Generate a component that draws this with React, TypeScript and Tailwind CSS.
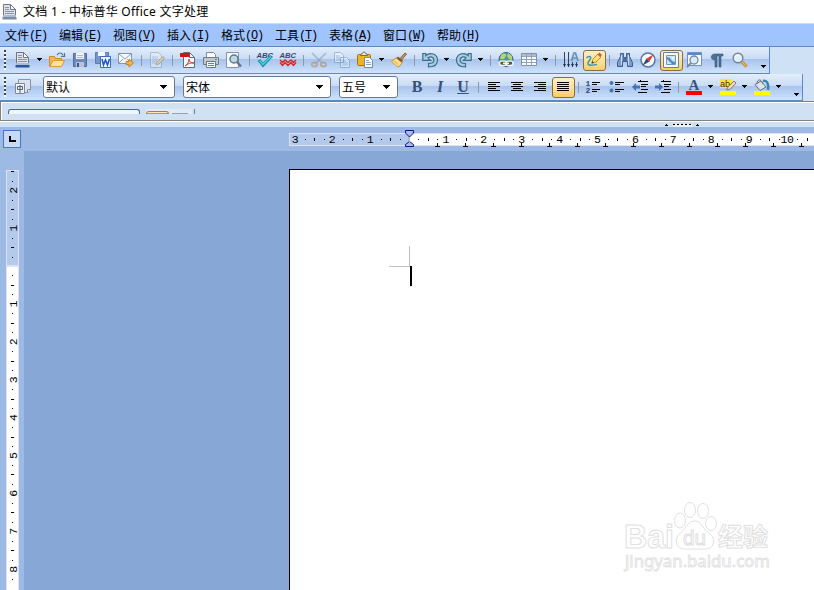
import React from "react";

type Item = { kind: "btn" | "active" | "sep" | "arrow"; icon?: React.ReactNode };

const btn = (icon: React.ReactNode): Item => ({ kind: "btn", icon });
const active = (icon: React.ReactNode): Item => ({ kind: "active", icon });
const sep: Item = { kind: "sep" };
const arrow: Item = { kind: "arrow" };

function Svg({ children, faded }: { children: React.ReactNode; faded?: boolean }) {
  return (
    <svg width="16" height="16" viewBox="0 0 16 16" fill="none" className={faded ? "shrink-0 overflow-visible opacity-45" : "shrink-0 overflow-visible"}>
      {children}
    </svg>
  );
}

function Down() {
  return (
    <svg width="5" height="3" viewBox="0 0 5 3" shapeRendering="crispEdges" className="shrink-0">
      <path d="M0 0h5v1H0zM1 1h3v1H1zM2 2h1v1H2z" fill="#000" />
    </svg>
  );
}

function NewDoc({ dark = "#2c5796" }: { dark?: string }) {
  return (
    <Svg>
      <path d="M1.500 14V.5h7l5 5V14z" fill="#dfe2e7" stroke="#6b7585" />
      <path d="M8.500.5v5h5z" fill="#fff" stroke="#6b7585" />
      <path d="M3 3.500h4M3 5.500h4M3 7.500h9M3 9.500h9" stroke="#8a92a0" />
      <path d="M1 11h13v2H1z" fill="#a9bbd6" />
      <path d="M.5 13h14v2.500H.5z" fill={dark} />
    </Svg>
  );
}

const openIcon = (
  <Svg>
    <path d="M.5 14V4.500h5l1 2h6V14z" fill="#f1b64d" stroke="#c78a2d" />
    <path d="M1 14.500 4 8.500h11.500L12.500 14.500z" fill="#ffe3a0" stroke="#d89b3c" />
    <path d="M8 3c2-3 5-2.500 6 .5M15.500 1v3.500H12" stroke="#4e7499" strokeWidth="1.200" />
  </Svg>
);

const saveIcon = (
  <Svg>
    <path d="M1.500 1.500h13v13h-13z" fill="#6d8ac0" stroke="#506ba4" />
    <path d="M4 1h8v6H4z" fill="#f3f5fa" />
    <path d="M4 10h8v5H4z" fill="#b9c3d8" />
    <path d="M5 11h2v4H5z" fill="#3c5688" />
    <path d="M5 3.500h6M5 5.500h6" stroke="#a9b7d1" />
  </Svg>
);

const wordIcon = (
  <Svg>
    <path d="M.5.5h13v11H.5z" fill="#7895ca" stroke="#5d7bb2" />
    <path d="M3 0h7v4H3z" fill="#f5f8ff" />
    <path d="M5.500 4.500h10v11h-10z" fill="#eef4ff" stroke="#3a6dbe" />
    <path d="m7 7 1.500 6L10.500 8l2 5L14.500 7" stroke="#1e57b5" strokeWidth="1.500" />
  </Svg>
);

const mailIcon = (
  <Svg>
    <path d="M.5 1.500h13v10H.5z" fill="#f6f8fc" stroke="#8194b2" />
    <path d="m1 2 6 5 6-5M1 11l4-4M13 11 9 7" stroke="#8ba0bf" />
    <path d="M8 9.500h3V7l4.500 4-4.500 4v-2.500H8z" fill="#f6b63f" stroke="#c18225" />
  </Svg>
);

const editIcon = (
  <Svg faded>
    <path d="M1.500.5h8l3 3v12h-11z" fill="#eef1f6" stroke="#7688a4" />
    <path d="M3 5h6M3 7h6M3 9h5M3 11h4" stroke="#8ba0bd" />
    <path d="m7 13 1-3 5-5 2 2-5 5z" fill="#efd15f" stroke="#a07830" />
    <path d="m13 5 1-1 2 2-1 1z" fill="#da604b" />
  </Svg>
);

const pdfIcon = (
  <Svg>
    <path d="M3.500.5h6l5 5v10h-11z" fill="#fbfbfd" stroke="#5f6b80" />
    <path d="M9.500.5v5h5" stroke="#5f6b80" />
    <path d="M0 1h9.500v4H0z" fill="#d90f16" />
    <path d="M5 14c2-1 4-4 4-7 0 3 2 4 5 4-3-.5-6 .5-9 3z" stroke="#c73b38" />
  </Svg>
);

const printIcon = (
  <Svg>
    <path d="M3.500 6V.5h7l2 2V6" fill="#fff" stroke="#7c8ba2" />
    <path d="M.5 5.500h15v7H.5z" fill="#c2c7cf" stroke="#727b88" />
    <path d="M3.500 9.500h9v6h-9z" fill="#fff" stroke="#68788d" />
    <path d="M5 11.500h6M5 13.500h6" stroke="#4c8ac4" />
    <path d="M12 7h2v1h-2z" fill="#45a54a" />
  </Svg>
);

const previewIcon = (
  <Svg>
    <path d="M.5.5h12v15H.5z" fill="#f8faff" stroke="#8293af" />
    <circle cx="8" cy="7" r="4" fill="#b8dbe8" stroke="#687586" strokeWidth="1.500" />
    <path d="m11 10 4 4.500" stroke="#6a7486" strokeWidth="2.500" />
  </Svg>
);

const abcText = (
  <text x="-.5" y="5.500" fontFamily="Liberation Sans" fontSize="7.500" fontWeight="bold" fontStyle="italic" fill="#39466f" textLength="16.500" lengthAdjust="spacingAndGlyphs">ABC</text>
);

const spellIcon = (
  <Svg>
    {abcText}
    <path d="m2 8 4 5L14.500 4" stroke="#168ba4" strokeWidth="3.200" />
    <path d="m2.500 8.500 3.500 4L14 4.500" stroke="#42ccd9" strokeWidth="1.600" />
  </Svg>
);

const autoSpellIcon = (
  <Svg>
    {abcText}
    <path d="m0 8 2.500 2.500L5 8l3 2.500L11 8l2.500 2.500L16 8M0 10.500l2.500 3 2.500-3 3 3 3-3 2.500 3 2.500-3" stroke="#dc2726" strokeWidth="1.400" />
  </Svg>
);

const cutIcon = (
  <Svg faded>
    <path d="m1 1 10 10M15 1 5 11" stroke="#76889f" strokeWidth="1.700" />
    <ellipse cx="3.500" cy="12.500" rx="2.700" ry="2" stroke="#b07635" strokeWidth="1.800" />
    <ellipse cx="12.500" cy="12.500" rx="2.700" ry="2" stroke="#b07635" strokeWidth="1.800" />
  </Svg>
);

const copyIcon = (
  <Svg faded>
    <path d="M.5.5h6l3 3v7h-9zM6.500 5.500h6l3 3v7h-9z" fill="#fff" stroke="#5c80b0" />
    <path d="M2 4h4M2 6h4M2 8h4M8 9h4M8 11h6M8 13h6" stroke="#5e91c7" />
  </Svg>
);

const pasteIcon = (
  <Svg>
    <rect x=".5" y="2.500" width="13" height="11" rx="1" fill="#edb51b" stroke="#a77412" />
    <path d="M3.500 3.500h7l-1-2h-1c0-2-3-2-3 0h-1z" fill="#e8e7df" stroke="#726b55" />
    <path d="M7.500 5.500h5l3 3v7h-8z" fill="#fff" stroke="#738ba9" />
    <path d="M9 8.500h3M9 10.500h5M9 12.500h5" stroke="#7ba8d0" />
  </Svg>
);

const brushIcon = (
  <Svg>
    <path d="m9.500 6 4.500-5 1.500 1L11 7.500z" fill="#c39a60" stroke="#8a6436" />
    <path d="M6 5.500 11.500 10 8 15c-2 0-5-3-7.500-6z" fill="#f9e08c" stroke="#c8952f" />
    <path d="m7 4.500 5 4-1.500 2-5-4z" fill="#8a5a2a" />
    <path d="m3 8.500 4 4" stroke="#d0a648" />
  </Svg>
);

const undoPath = (
  <path d="M.8 1.500h3v2.200C8-.5 15.500 2 15.500 8c0 4.500-3.500 7-9 7v-3.500c3.500.2 5.500-1 5.500-3.300C12 5 8 4 6 6l2.500 2.300H.8z" fill="#a5d0e2" stroke="#3f6b8a" strokeWidth="1.200" />
);
const undoIcon = <Svg>{undoPath}</Svg>;
const redoIcon = (
  <Svg>
    <g transform="matrix(-1 0 0 1 16 0)">{undoPath}</g>
  </Svg>
);

const globeIcon = (
  <Svg>
    <circle cx="8" cy="7.500" r="7" fill="#4c91c8" stroke="#376894" />
    <path d="M3 3c3-3 6-1 5 1L6 7H2zM10 1l4 3v4l-3-1-2-3z" fill="#b4d95c" />
    <path d="M2 8.500h12l-2 5H4z" fill="#49793f" />
    <rect x="1.500" y="9" width="7" height="4.500" rx="2.200" fill="#4c5c4c" stroke="#eef2f4" strokeWidth="1.500" />
    <rect x="8" y="9" width="7" height="4.500" rx="2.200" fill="#4c5c4c" stroke="#eef2f4" strokeWidth="1.500" />
    <path d="M5 11.300h6" stroke="#f4f7f8" strokeWidth="1.500" />
  </Svg>
);

const tableIcon = (
  <Svg>
    <path d="M.5 1.500h15v12H.5z" fill="#fbfcff" stroke="#8091ac" />
    <path d="M1 2h14v2H1z" fill="#aebed5" />
    <path d="M1 4.500h14M1 7.500h14M1 10.500h14M5.500 2v12M10.500 2v12" stroke="#91a1ba" />
  </Svg>
);

const directionIcon = (
  <Svg>
    <path d="M1.500 0v15M5.500 0v15M9.500 10v5M13.500 10v5" stroke="#34435c" />
    <path d="M0 12h3l-1.500 3zM4 12h3l-1.500 3zM8 12h3l-1.500 3zM12 12h3l-1.500 3z" fill="#26354e" />
    <path d="m8.500 9 2.500-8h1.500L15 9M9.500 6h4.500" stroke="#6592b4" strokeWidth="1.700" />
  </Svg>
);

const drawIcon = (
  <Svg>
    <path d="M.5 6c1.500-2 5-2 4 .5C4 8.500 1.500 9.500 2 12c1.500 2.500 6 .5 9 .5" stroke="#3599b5" strokeWidth="1.500" />
    <path d="m6 11 1-4 5-5 3 3-5 5z" fill="#ffe36c" stroke="#c08f3a" />
    <path d="m11.500 2.500 2-2L16 3l-2 2z" fill="#df5240" />
    <path d="m5.500 11.500.5-2.500 2 2z" fill="#383838" />
  </Svg>
);

const findIcon = (
  <Svg>
    <path d="M3.500 1.500h3v4h3v-4h3v3l3 6v4h-5v-5h-5v5h-5v-4l3-6z" fill="#7c9dc9" stroke="#3f5d91" />
    <path d="M4.500 3v10M11.500 3v10" stroke="#cfdff3" />
    <path d="M6 6h4v3H6z" fill="#4b6a9d" />
  </Svg>
);

const compassIcon = (
  <Svg>
    <circle cx="8" cy="8" r="7" fill="#f7fbff" stroke="#59779e" strokeWidth="1.500" />
    <path d="M13.500 2.500 9.500 9.500 6.500 6.500z" fill="#e53b29" />
    <path d="M2.500 13.500 6.500 6.500l3 3z" fill="#2c4776" />
  </Svg>
);

const galleryIcon = (
  <Svg>
    <path d="M.5.5h15v15H.5z" fill="#f7fbff" stroke="#5c83b3" />
    <path d="M3.500 3.500h9v9h-9z" fill="#cfe4f6" stroke="#6f97c2" />
    <path d="m4 5 3 1 2 3 3 1v2H9L6 9 4 7z" fill="#4d8cc0" />
    <circle cx="10" cy="6" r="1" fill="#fff" />
  </Svg>
);

const dataSourceIcon = (
  <Svg>
    <path d="M1.500.5h14v13h-14z" fill="#f6faff" stroke="#6c91c5" />
    <path d="M2 1h13v2H2z" fill="#5c87ce" />
    <circle cx="8" cy="8" r="4" fill="#d9edf7" stroke="#71859d" strokeWidth="1.300" />
    <path d="m5 11-4 4" stroke="#788393" strokeWidth="2" />
  </Svg>
);

const pilcrowIcon = (
  <Svg>
    <path d="M14 2H6C1 2 1 8 6 8v7h2V4h2v11h2V4h2z" fill="#4e7193" stroke="#36587b" strokeWidth=".6" />
  </Svg>
);

const zoomIcon = (
  <Svg>
    <circle cx="6" cy="6" r="4.800" fill="#dff0f8" stroke="#788695" strokeWidth="1.500" />
    <path d="M3.500 5c0-1 1-2 2.500-2" stroke="#fff" />
    <path d="m10 10 4.500 4.500" stroke="#b77b20" strokeWidth="3" />
    <path d="m10 10 4 4" stroke="#edbd54" strokeWidth="1.500" />
  </Svg>
);

const stylesIcon = (
  <Svg>
    <path d="M3.500.5h12v10l-2.500 3h-9.500z" fill="#dde3ec" stroke="#8b95a4" />
    <path d="M15.500 10.500h-3v3" fill="#fff" stroke="#7c8593" />
    <path d="M.5 4.500h9v10h-9z" fill="#eef0f3" stroke="#7d8898" />
    <path d="M5 6v8M2.500 7.500h5v3h-5z" stroke="#4f6077" />
  </Svg>
);

function Letter({ children, className }: { children: string; className: string }) {
  return <span className={`font-['Liberation_Serif',serif] text-[16px] leading-4 font-bold text-[#3a4d7c] ${className}`}>{children}</span>;
}

function alignIcon(d: string) {
  return (
    <Svg>
      <path d={d} stroke="#000" shapeRendering="crispEdges" />
    </Svg>
  );
}

const numberedIcon = (
  <Svg>
    <text x="-.5" y="6.500" fontFamily="Liberation Mono" fontSize="8" fontWeight="bold" fill="#35476b">1</text>
    <text x="-.5" y="14" fontFamily="Liberation Mono" fontSize="8" fontWeight="bold" fill="#35476b">2</text>
    <path d="M6 3.500h8M6 5.500h5M6 10.500h8M6 12.500h5" stroke="#000" shapeRendering="crispEdges" />
  </Svg>
);

const bulletIcon = (
  <Svg>
    <circle cx="2.500" cy="4" r="2" fill="#4774b3" />
    <circle cx="2.500" cy="11.500" r="2" fill="#4774b3" />
    <path d="M6 3.500h9M6 5.500h5M6 10.500h9M6 12.500h5" stroke="#000" shapeRendering="crispEdges" />
  </Svg>
);

function indentIcon(arrowPath: string) {
  return (
    <Svg>
      <path d={arrowPath} fill="#4573b4" />
      <path d="M6 2.500h10M9 5.500h7M9 7.500h5M9 10.500h7M6 13.500h9" stroke="#000" shapeRendering="crispEdges" />
      <path d="M8.500 1v2M8.500 13v2" stroke="#000" strokeDasharray="1 1" />
    </Svg>
  );
}

const fontColorIcon = (
  <Svg>
    <text x="2.500" y="11" fontFamily="Liberation Serif" fontSize="15" fontWeight="bold" fill="#3e517f">A</text>
    <path d="M0 12h16v4H0z" fill="#f00" />
  </Svg>
);

const highlightIcon = (
  <Svg>
    <path d="M0 0h12v9H0z" fill="#ffe32e" />
    <text x="0" y="8" fontFamily="Liberation Sans" fontSize="9" fill="#333">ab</text>
    <path d="m8 8 6-6 2 2-5.500 6-4 1z" fill="#eadcb4" stroke="#8d7c5c" />
    <path d="M0 12h16v4H0z" fill="#ff0" />
  </Svg>
);

const fillIcon = (
  <Svg>
    <path d="M9 2c4-1 6 3 5 9" stroke="#2f86b4" strokeWidth="2.500" />
    <path d="m1 5.500 6-3.500 5 6-6 3.500z" fill="#dce2e5" stroke="#64717a" />
    <path d="M3 5c0-5 4-6 6 0" stroke="#65727c" />
    <path d="M0 12h16v4H0z" fill="#ff0" />
  </Svg>
);

const standardItems: Item[] = [
  btn(<NewDoc />), arrow, btn(openIcon), btn(saveIcon), btn(wordIcon), btn(mailIcon), sep,
  btn(editIcon), sep,
  btn(pdfIcon), btn(printIcon), btn(previewIcon), sep,
  btn(spellIcon), btn(autoSpellIcon), sep,
  btn(cutIcon), btn(copyIcon), btn(pasteIcon), arrow, btn(brushIcon), sep,
  btn(undoIcon), arrow, btn(redoIcon), arrow, sep,
  btn(globeIcon), btn(tableIcon), arrow, sep,
  btn(directionIcon), active(drawIcon), sep,
  btn(findIcon), btn(compassIcon), active(galleryIcon), btn(dataSourceIcon), btn(pilcrowIcon), btn(zoomIcon),
];

const formatItems: Item[] = [
  btn(<Letter className="">B</Letter>),
  btn(<Letter className="italic">I</Letter>),
  btn(<Letter className="underline underline-offset-1">U</Letter>),
  sep,
  btn(alignIcon("M2 3.500h12M2 5.500h8M2 7.500h12M2 9.500h8M2 11.500h12")),
  btn(alignIcon("M2 3.500h12M4 5.500h8M2 7.500h12M4 9.500h8M2 11.500h12")),
  btn(alignIcon("M2 3.500h12M6 5.500h8M2 7.500h12M6 9.500h8M2 11.500h12")),
  active(alignIcon("M2 3.500h12M2 5.500h12M2 7.500h12M2 9.500h12M2 11.500h12")),
  sep,
  btn(numberedIcon), btn(bulletIcon),
  btn(indentIcon("M0 8l4-4v2.500h4v3H4V12z")),
  btn(indentIcon("M8 8 4 4v2.500H0v3h4V12z")),
  sep,
  btn(fontColorIcon), arrow, btn(highlightIcon), arrow, btn(fillIcon), arrow,
];

function Items({ items }: { items: Item[] }) {
  return (
    <>
      {items.map((item, i) => {
        if (item.kind === "sep") {
          return (
            <div key={i} className="flex w-2 shrink-0 pl-[3px]">
              <div className="h-[11px] w-px bg-[#8f98a8]" />
            </div>
          );
        }
        if (item.kind === "arrow") {
          return (
            <div key={i} className="flex w-[11px] shrink-0 justify-center pr-[2px] pb-[2px]">
              <Down />
            </div>
          );
        }
        if (item.kind === "active") {
          return (
            <div key={i} className="flex h-[21px] w-[23px] shrink-0 items-center rounded-[3px] border border-[#8b6b43] bg-gradient-to-b from-[#fff0c8] to-[#f8cf67] pl-[2px]">
              {item.icon}
            </div>
          );
        }
        return (
          <div key={i} className="flex w-[23px] shrink-0 items-center pl-[3px]">
            <div className="flex w-4 justify-center">{item.icon}</div>
          </div>
        );
      })}
    </>
  );
}

function Grip() {
  return (
    <div className="flex w-3 shrink-0 pl-1">
      <div className="h-[20px] w-[2px] bg-[repeating-linear-gradient(to_bottom,#34425a_0px,#34425a_2px,#f8fbff_2px,#f8fbff_4px)]" />
    </div>
  );
}

function Combo({ text, className }: { text: string; className: string }) {
  return (
    <div className={`flex h-[22px] shrink-0 items-center justify-between rounded-[3px] border border-[#6f7788] bg-white pr-[7px] pl-[2px] text-[12px] leading-3 ${className}`}>
      <span className="pt-px">{text}</span>
      <svg width="7" height="4" viewBox="0 0 7 4" shapeRendering="crispEdges">
        <path d="M0 0h7v1H0zM1 1h5v1H1zM2 2h3v1H2zM3 3h1v1H3z" />
      </svg>
    </div>
  );
}

const menus = [
  ["文件", "F"], ["编辑", "E"], ["视图", "V"], ["插入", "I"], ["格式", "O"],
  ["工具", "T"], ["表格", "A"], ["窗口", "W"], ["帮助", "H"],
];

const UNIT = 37.9;

function HorizontalRuler() {
  const quarters = Array.from({ length: 56 }, (_, i) => i - 12);
  const tabs = Array.from({ length: 14 }, (_, i) => i + 1);
  return (
    <svg width="525" height="24" viewBox="289 127 525 24" shapeRendering="crispEdges">
      <rect x="289" y="133" width="525" height="13" fill="#dfe3f3" />
      <rect x="290" y="134" width="119" height="11" fill="#b3caec" />
      <rect x="409" y="134" width="405" height="11" fill="#fff" />
      {quarters.map((q) => {
        const x = Math.round(409 + (q * UNIT) / 4);
        if (q % 4 === 0) return null;
        if (q % 2 === 0) return <rect key={q} x={x} y="138" width="1" height="3" />;
        return <rect key={q} x={x} y="139" width="1" height="1" />;
      })}
      {[-3, -2, -1, 1, 2, 3, 4, 5, 6, 7, 8, 9, 10].map((n) => (
        <text key={n} x={409 + n * UNIT - (n === -3 ? 0 : 1)} y="143" fontSize="11.500" textAnchor="middle" fontFamily="Liberation Mono" letterSpacing={n === 10 ? -0.5 : 0}>
          {Math.abs(n)}
        </text>
      ))}
      {tabs.map((t) => (
        <path key={t} d={`M${409 + t * 28} 143h1v3h2v1h-5v-1h2z`} />
      ))}
      <path d="M405.500 130.500h8v2.500l-4 4-4-4zM409.500 141.500l4 3v2h-8v-2z" fill="#a7bce6" stroke="#10107c" shapeRendering="auto" />
      <path d="m409.500 137-.5 1 .5 4" fill="none" stroke="#8d8fb5" shapeRendering="auto" />
    </svg>
  );
}

function VerticalRuler() {
  const quarters = Array.from({ length: 44 }, (_, i) => i - 10);
  return (
    <svg width="24" height="439" viewBox="0 151 24 439" shapeRendering="crispEdges" className="shrink-0 bg-[#9cbae3]">
      <rect x="6" y="170" width="13" height="420" fill="#dfe0f2" />
      <rect x="7" y="171" width="11" height="94" fill="#b3caec" />
      <rect x="7" y="267" width="11" height="323" fill="#fff" />
      {quarters.map((q) => {
        const y = Math.round(266 + (q * UNIT) / 4);
        if (q % 4 === 0) return null;
        if (q % 2 === 0) return <rect key={q} x="11" y={y} width="3" height="1" />;
        return <rect key={q} x="12" y={y} width="1" height="1" />;
      })}
      {[-2, -1, 1, 2, 3, 4, 5, 6, 7, 8].map((n) => (
        <text key={n} transform={`translate(17 ${266 + n * UNIT}) rotate(-90)`} fontSize="11.500" textAnchor="middle" fontFamily="Liberation Mono">
          {Math.abs(n)}
        </text>
      ))}
    </svg>
  );
}

function Watermark() {
  return (
    <svg width="160" height="80" viewBox="620 495 160 80" fill="#fff" stroke="#e0e0e0" strokeWidth="1" className="absolute top-[325px] left-[330px]">
      <text x="624" y="548" fontFamily="Liberation Sans" fontSize="33" fontWeight="bold" textLength="50" lengthAdjust="spacingAndGlyphs">Bai</text>
      <ellipse cx="680" cy="520.500" rx="5.500" ry="7.500" />
      <ellipse cx="690" cy="510" rx="5.500" ry="7.500" />
      <ellipse cx="703" cy="511" rx="5.500" ry="7.500" />
      <ellipse cx="711" cy="523.500" rx="5.500" ry="7" />
      <path d="M694.500 521c-7 0-8 7-13 11-4 3-6 7-5 11 1 6 7 6 11 6h14c5 0 11 0 12-6 1-5-2-8-6-11-5-4-6-11-13-11z" />
      <text x="683" y="545" fontFamily="Liberation Sans" fontSize="21" textLength="23" lengthAdjust="spacingAndGlyphs">du</text>
      <text x="718" y="546" fontFamily="Noto Sans CJK SC" fontSize="25" fontWeight="bold">经验</text>
      <text x="625" y="567" fontFamily="Noto Sans" fontSize="16" strokeWidth=".8" textLength="145" lengthAdjust="spacingAndGlyphs">jingyan.baidu.com</text>
    </svg>
  );
}

export default function App() {
  return (
    <div className="flex h-[590px] w-[814px] flex-col overflow-hidden bg-[#87a8d6] font-['Liberation_Sans','Noto_Sans_CJK_SC',sans-serif] text-black">
      {/* Title bar */}
      <header className="flex h-[23px] shrink-0 items-center bg-white pl-[2px] font-['Noto_Sans','Noto_Sans_CJK_SC',sans-serif] text-[12px]">
        <NewDoc dark="#7f8da3" />
        <span className="ml-[5px] tracking-[0.26px] whitespace-pre">文档 1 - 中标普华 Office 文字处理</span>
      </header>

      {/* Menu bar */}
      <nav className="flex h-[23px] shrink-0 items-center gap-3 border-t border-[#c6dcff] bg-[#a0c4ff] pt-px pl-[5px] text-[12px]">
        {menus.map(([label, key]) => (
          <div key={key} className="flex w-[42px] shrink-0 whitespace-nowrap">
            <span className="w-6">{label}</span>
            <span className="font-['Liberation_Mono',monospace] tracking-[-1.2px]">
              (<span className="underline">{key}</span>)
            </span>
          </div>
        ))}
      </nav>

      {/* Standard toolbar */}
      <div className="flex h-[28px] shrink-0 bg-[#cfe1f4]">
        <div className="flex w-[770px] items-center border-y border-r border-[#5f88c6] bg-[linear-gradient(to_bottom,#e3eefb_0%,#c9dcf5_45%,#a8c4ec_48%,#cfe3fc_100%)]">
          <Grip />
          <Items items={standardItems} />
          <div className="mt-[13px] ml-[9px]"><Down /></div>
        </div>
        <div className="flex-1 border-t border-[#5f88c6]" />
      </div>

      {/* Formatting toolbar */}
      <div className="flex h-[27px] shrink-0 bg-[#cfe1f4]">
        <div className="flex w-[803px] items-center border-r border-b border-[#5f88c6] bg-[linear-gradient(to_bottom,#e3eefb_0%,#c9dcf5_45%,#a8c4ec_48%,#cfe3fc_100%)]">
          <Grip />
          <Items items={[btn(stylesIcon)]} />
          <Combo text="默认" className="ml-2 w-[132px]" />
          <Combo text="宋体" className="ml-2 w-[148px]" />
          <Combo text="五号" className="mr-2 ml-2 w-[59px]" />
          <Items items={formatItems} />
          <div className="mt-[15px] ml-[9px]"><Down /></div>
        </div>
      </div>

      {/* Collapsed input bar */}
      <div className="flex h-5 shrink-0 border-y border-l border-[#808080] bg-[#cfe1f2]">
        <div className="flex flex-1 border-t border-l border-white pt-[6px] pl-[6px]">
          <div className="h-[5px] w-[132px] rounded-t-[3px] border border-b-0 border-[#446699] bg-[#eef5fd]" />
          <div className="ml-[6px] flex h-[5px] w-[46px] items-end bg-[#e1ebf6]">
            <div className="h-[3px] w-[23px] rounded-t-[3px] border border-b-[#999] border-[#a57e4e] bg-[#ffe4b3]" />
            <div className="ml-[3px] h-px w-4 bg-[#98a3b2]" />
          </div>
          <div className="ml-[2px] h-[5px] w-px bg-[#808080]" />
        </div>
      </div>
      <div className="flex h-[6px] shrink-0 items-center border-t border-white bg-[#cfe1f2] pl-[665px]">
        <svg width="35" height="4" viewBox="0 0 35 4" shapeRendering="crispEdges">
          <path d="M1 1h1v1h1v1H0V2h1zM32 1h1v1h1v1h-3V2h1z" />
          <path d="M8 1h19v3H8z" fill="#edf4fb" />
          <path d="M8 1h2v1H8zM12 1h2v1h-2zM16 1h2v1h-2zM20 1h2v1h-2zM24 1h2v1h-2z" />
        </svg>
      </div>

      {/* Horizontal ruler */}
      <div className="flex h-6 shrink-0 bg-[#9cbae3]">
        <div className="flex w-[289px] pt-[3px] pl-[3px]">
          <div className="flex size-[18px] items-center justify-center border border-[#4773c9] bg-[#c7daf5]">
            <svg width="7" height="6" viewBox="0 0 7 6"><path d="M0 0h2v4h5v2H0z" /></svg>
          </div>
        </div>
        <HorizontalRuler />
      </div>

      {/* Document area */}
      <main className="flex h-[439px] shrink-0">
        <VerticalRuler />
        <div className="flex flex-1 pt-[18px] pl-[265px]">
          <div className="relative flex-1 border-t border-l border-black bg-white">
            <svg width="24" height="42" viewBox="0 0 24 42" shapeRendering="crispEdges" className="absolute top-[76px] left-[99px]">
              <path d="M20 0h1v20h-1zM0 20h21v1H0z" fill="#c0c0c0" />
              <path d="M21 20h2v20h-2z" fill="#000" />
            </svg>
            <Watermark />
          </div>
        </div>
      </main>
    </div>
  );
}
